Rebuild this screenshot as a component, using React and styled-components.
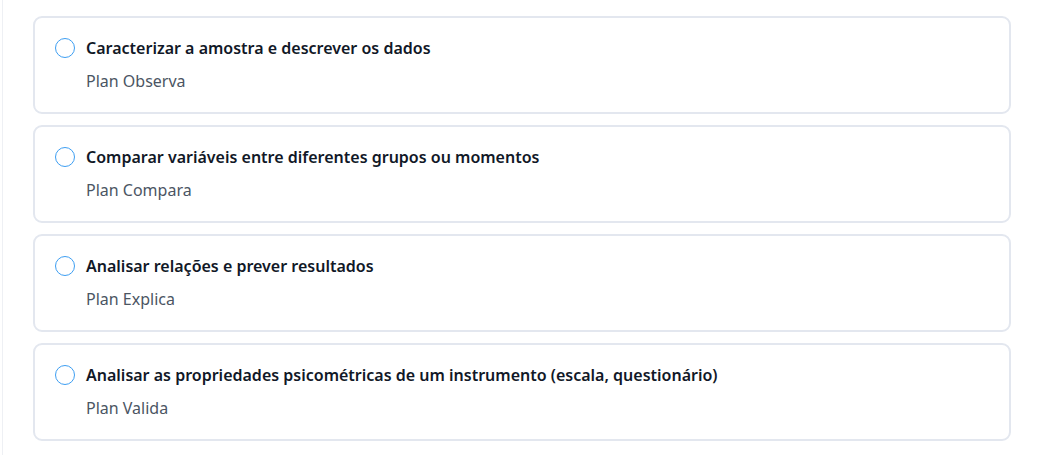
import React from "react";
import styled, { createGlobalStyle } from "styled-components";

const GlobalStyle = createGlobalStyle`
  html, body {
    margin: 0;
    padding: 0;
    background: #ffffff;
  }
  body {
    font-family: "Noto Sans", "Open Sans", sans-serif;
  }
`;

const Page = styled.div`
  margin-left: 2px;
  border-left: 1px solid #eef0f4;
  min-height: 455px;
  box-sizing: border-box;
  padding: 16px 28px 0 30px;
`;

const List = styled.div`
  display: flex;
  flex-direction: column;
  gap: 11px;
  width: 978px;
`;

const Card = styled.label`
  display: flex;
  align-items: flex-start;
  gap: 11px;
  height: 98px;
  box-sizing: border-box;
  padding: 20px 20px 0 20px;
  border: 2px solid #e3e7ef;
  border-radius: 9px;
  background: #fff;
  cursor: pointer;
`;

const Radio = styled.span`
  flex: none;
  width: 20px;
  height: 20px;
  margin-top: 0;
  box-sizing: border-box;
  border: 1.5px solid #3d9ef2;
  border-radius: 50%;
  background: #fff;
`;

const Texts = styled.div`
  display: flex;
  flex-direction: column;
  gap: 13px;
`;

const Title = styled.div`
  font-size: 16px;
  line-height: 20px;
  font-weight: 600;
  color: #111827;
`;

const Subtitle = styled.div`
  font-size: 16px;
  line-height: 20px;
  color: #4b5563;
`;

const options = [
  { title: "Caracterizar a amostra e descrever os dados", plan: "Plan Observa" },
  { title: "Comparar variáveis entre diferentes grupos ou momentos", plan: "Plan Compara" },
  { title: "Analisar relações e prever resultados", plan: "Plan Explica" },
  {
    title: "Analisar as propriedades psicométricas de um instrumento (escala, questionário)",
    plan: "Plan Valida",
  },
];

const App = () => {
  return (
    <>
      <GlobalStyle />
      <Page>
        <List>
          {options.map((o) => (
            <Card key={o.plan}>
              <Radio />
              <Texts>
                <Title>{o.title}</Title>
                <Subtitle>{o.plan}</Subtitle>
              </Texts>
            </Card>
          ))}
        </List>
      </Page>
    </>
  );
};

export default App;
